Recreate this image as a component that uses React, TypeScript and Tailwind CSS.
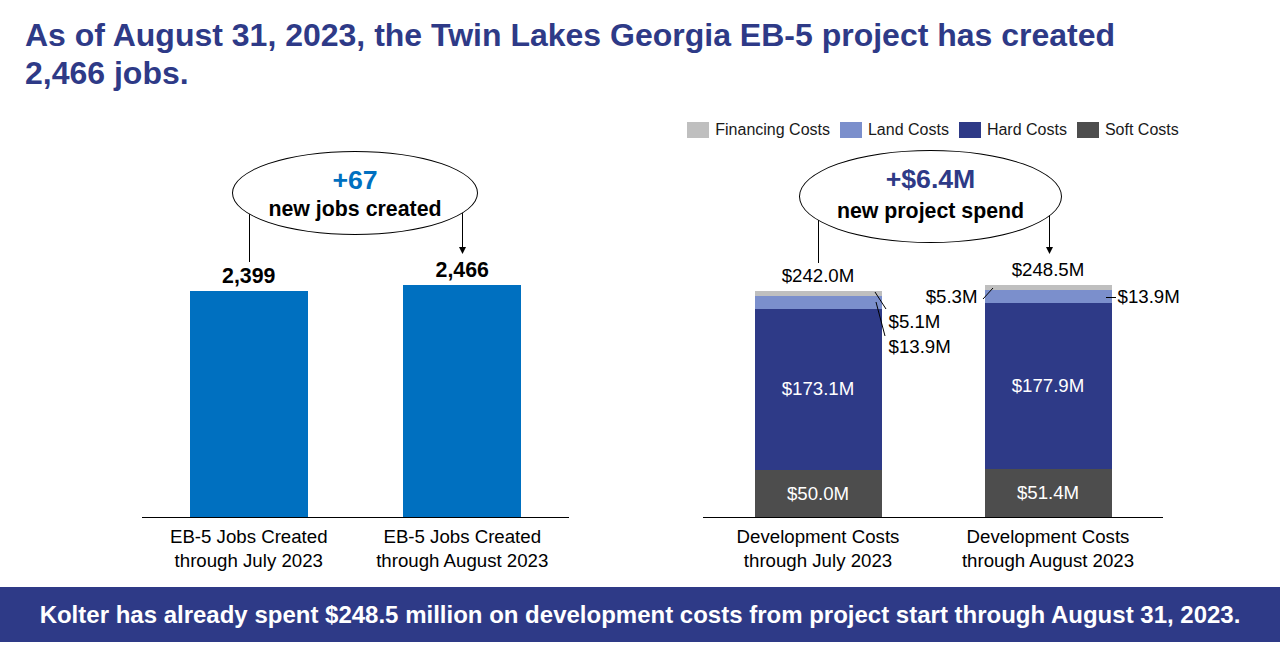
import React from "react"

type Segment = {
    name: string
    value: number
    color: string
    inside?: boolean
}

// px per $M, taken from the chart: $242.0M bar is 226px tall
const COST_SCALE = 226 / 242
const JOB_SCALE = 226 / 2399

const legend = [
    { name: "Financing Costs", color: "bg-[#bfbfbf]" },
    { name: "Land Costs", color: "bg-[#7b8fcc]" },
    { name: "Hard Costs", color: "bg-[#2e3a87]" },
    { name: "Soft Costs", color: "bg-[#4d4d4d]" },
]

const julyCosts: Segment[] = [
    { name: "financing", value: 5.1, color: "bg-[#bfbfbf]" },
    { name: "land", value: 13.9, color: "bg-[#7b8fcc]" },
    { name: "hard", value: 173.1, color: "bg-[#2e3a87]", inside: true },
    { name: "soft", value: 50.0, color: "bg-[#4d4d4d]", inside: true },
]

const augustCosts: Segment[] = [
    { name: "financing", value: 5.3, color: "bg-[#bfbfbf]" },
    { name: "land", value: 13.9, color: "bg-[#7b8fcc]" },
    { name: "hard", value: 177.9, color: "bg-[#2e3a87]", inside: true },
    { name: "soft", value: 51.4, color: "bg-[#4d4d4d]", inside: true },
]

function Callout({ className, top, bottom, topColor }: { className: string; top: string; bottom: string; topColor: string }) {
    return (
        <div
            className={`absolute flex flex-col items-center justify-center rounded-[50%] border border-black bg-white font-bold ${className}`}
        >
            <div className={`text-[26.67px] ${topColor}`}>{top}</div>
            <div className="text-[21.33px]">{bottom}</div>
        </div>
    )
}

function JobsChart() {
    const bars = [
        { value: 2399, label: "2,399", name: ["EB-5 Jobs Created", "through July 2023"] },
        { value: 2466, label: "2,466", name: ["EB-5 Jobs Created", "through August 2023"] },
    ]

    return (
        <div className="flex w-[427px] flex-col">
            <div className="relative flex h-[426px] border-b border-black">
                <svg className="absolute inset-0 overflow-visible" width="427" height="426">
                    <line x1="107.5" y1="110" x2="107.5" y2="170" stroke="black" strokeWidth="1" />
                    <line x1="320.5" y1="110" x2="320.5" y2="156" stroke="black" strokeWidth="1" />
                    <polygon points="317,155 324,155 320.5,162" fill="black" />
                </svg>
                {bars.map((b) => (
                    <div key={b.label} className="flex flex-1 flex-col items-center justify-end">
                        <div className="mb-[3px] text-[21.33px] font-bold leading-[24px]">{b.label}</div>
                        <div className="w-[118px] bg-[#0070c0]" style={{ height: Math.round(b.value * JOB_SCALE) }} />
                    </div>
                ))}
                <Callout
                    className="left-[90px] top-[59px] h-[84px] w-[246px] pt-[4px] leading-[29px]"
                    top="+67"
                    bottom="new jobs created"
                    topColor="text-[#0070c0]"
                />
            </div>
            <div className="flex pt-[7px] text-[18.67px] leading-[24px]">
                {bars.map((b) => (
                    <div key={b.label} className="flex-1 text-center">
                        {b.name[0]}
                        <br />
                        {b.name[1]}
                    </div>
                ))}
            </div>
        </div>
    )
}

function CostBar({ segments, total, children }: { segments: Segment[]; total: string; children?: React.ReactNode }) {
    return (
        <div className="flex flex-col items-center">
            <div className="mb-[4px] text-[18.67px] leading-[22px]">{total}</div>
            <div className="relative flex w-[127px] flex-col">
                {segments.map((s) => (
                    <div
                        key={s.name}
                        className={`flex items-center justify-center text-[18.67px] text-white ${s.color}`}
                        style={{ height: s.value * COST_SCALE }}
                    >
                        {s.inside ? `$${s.value.toFixed(1)}M` : null}
                    </div>
                ))}
                {children}
            </div>
        </div>
    )
}

function CostsChart() {
    return (
        <div className="flex w-[460px] flex-col">
            <div className="-mx-[16px] mt-[30px] flex h-[16px] items-center justify-center gap-[10px] whitespace-nowrap text-[16px] leading-[16px] text-[#1a1a1a]">
                {legend.map((l) => (
                    <div key={l.name} className="flex items-center gap-[6px]">
                        <span className={`h-[16px] w-[22px] ${l.color}`} />
                        <span>{l.name}</span>
                    </div>
                ))}
            </div>
            <div className="relative flex h-[380px] border-b border-black">
                <svg className="absolute inset-0 overflow-visible" width="460" height="380">
                    <line x1="115.5" y1="70" x2="115.5" y2="125" stroke="black" strokeWidth="1" />
                    <line x1="346.5" y1="70" x2="346.5" y2="110" stroke="black" strokeWidth="1" />
                    <polygon points="343,109 350,109 346.5,116" fill="black" />
                </svg>
                <div className="flex flex-1 flex-col items-center justify-end">
                    <CostBar segments={julyCosts} total="$242.0M">
                        <svg className="absolute left-0 top-0 overflow-visible" width="127" height="60">
                            <line x1="120" y1="1" x2="131" y2="18" stroke="black" strokeWidth="1" />
                            <line x1="121" y1="11" x2="130" y2="45" stroke="black" strokeWidth="1" />
                        </svg>
                        <span className="absolute left-[134px] top-[19px] whitespace-nowrap text-[18.67px] leading-[24px]">$5.1M</span>
                        <span className="absolute left-[134px] top-[44px] whitespace-nowrap text-[18.67px] leading-[24px]">$13.9M</span>
                    </CostBar>
                </div>
                <div className="flex flex-1 flex-col items-center justify-end">
                    <CostBar segments={augustCosts} total="$248.5M">
                        <svg className="absolute left-0 top-0 overflow-visible" width="127" height="30">
                            <line x1="8" y1="3" x2="-2" y2="14" stroke="black" strokeWidth="1" />
                            <line x1="121" y1="12.5" x2="131" y2="12.5" stroke="black" strokeWidth="1" />
                        </svg>
                        <span className="absolute right-[134px] top-0 whitespace-nowrap text-[18.67px] leading-[24px]">$5.3M</span>
                        <span className="absolute left-[133px] top-0 whitespace-nowrap text-[18.67px] leading-[24px]">$13.9M</span>
                    </CostBar>
                </div>
                <Callout
                    className="left-[96px] top-[12px] h-[93px] w-[263px] pb-[3px] leading-[32px]"
                    top="+$6.4M"
                    bottom="new project spend"
                    topColor="text-[#2e3a87]"
                />
            </div>
            <div className="flex pt-[7px] text-[18.67px] leading-[24px]">
                <div className="flex-1 text-center">
                    Development Costs
                    <br />
                    through July 2023
                </div>
                <div className="flex-1 text-center">
                    Development Costs
                    <br />
                    through August 2023
                </div>
            </div>
        </div>
    )
}

export default function App() {
    return (
        <div className="flex h-[658px] w-[1280px] flex-col overflow-hidden bg-white font-['Liberation_Sans',Arial,sans-serif] text-black">
            <h1 className="h-[92px] shrink-0 pl-[25px] pt-[16px] text-[32px] font-bold leading-[38px] text-[#2e3a87]">
                As of August 31, 2023, the Twin Lakes Georgia EB-5 project has created
                <br />
                2,466 jobs.
            </h1>
            <div className="flex h-[495px] shrink-0 gap-[134px] pl-[142px]">
                <JobsChart />
                <CostsChart />
            </div>
            <div className="flex h-[55px] shrink-0 items-center justify-center bg-[#2e3a87] text-[24px] font-bold text-white">
                Kolter has already spent $248.5 million on development costs from project start through August 31, 2023.
            </div>
        </div>
    )
}
